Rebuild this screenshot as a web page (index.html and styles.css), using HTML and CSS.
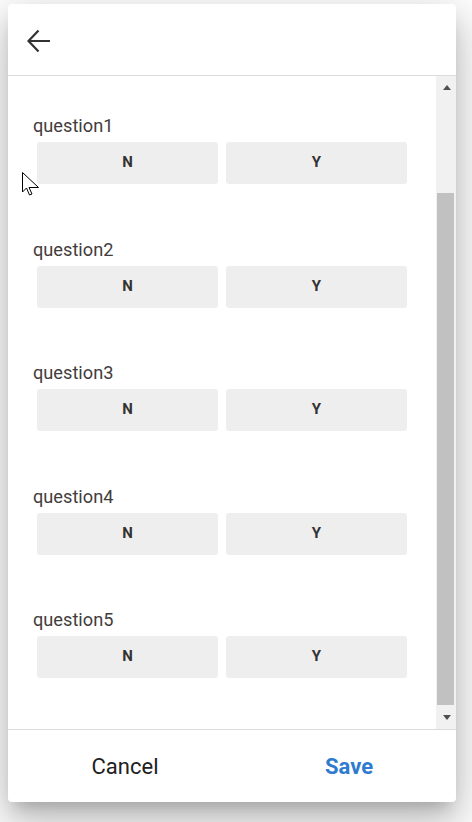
FILE: index.html
```html
<!DOCTYPE html>
<html>
<head>
<meta charset="utf-8">
<link rel="stylesheet" href="styles.css">
</head>
<body>
<div class="dialog">
  <div class="header">
    <svg class="back" width="24" height="24" viewBox="0 0 24 24">
      <path d="M11.5 1.5 L1.5 12 L11.5 22.5 M1.5 12 H23" fill="none" stroke="#333" stroke-width="2.2" stroke-linejoin="miter"/>
    </svg>
  </div>
  <div class="body">
    <div class="content">
      <div class="question">
        <div class="label">question1</div>
        <div class="choices"><div class="choice">N</div><div class="choice">Y</div></div>
      </div>
      <div class="question">
        <div class="label">question2</div>
        <div class="choices"><div class="choice">N</div><div class="choice">Y</div></div>
      </div>
      <div class="question">
        <div class="label">question3</div>
        <div class="choices"><div class="choice">N</div><div class="choice">Y</div></div>
      </div>
      <div class="question">
        <div class="label">question4</div>
        <div class="choices"><div class="choice">N</div><div class="choice">Y</div></div>
      </div>
      <div class="question">
        <div class="label">question5</div>
        <div class="choices"><div class="choice">N</div><div class="choice">Y</div></div>
      </div>
    </div>
    <div class="scrollbar">
      <div class="sb-btn"><span class="tri-up"></span></div>
      <div class="sb-track"><div class="sb-thumb"></div></div>
      <div class="sb-btn"><span class="tri-down"></span></div>
    </div>
  </div>
  <div class="footer">
    <div class="action cancel">Cancel</div>
    <div class="action save">Save</div>
  </div>
</div>
<svg class="cursor" width="18" height="25" viewBox="0 0 18 25">
  <path d="M0.5 0.5 L0.5 20 L4.5 16 L7.5 23 L10 22 L7 15.5 L16.5 15.5 Z" fill="#fff" stroke="#000" stroke-width="1"/>
</svg>
</body>
</html>
```
FILE: styles.css
```css
html, body {
  margin: 0;
  padding: 0;
  background: #ffffff;
}
body {
  font-family: Roboto, "Liberation Sans", Arial, sans-serif;
  width: 472px;
  height: 822px;
  overflow: hidden;
  position: relative;
}
.dialog {
  margin: 4px 0 0 8px;
  width: 448px;
  height: 798px;
  background: #fff;
  border-radius: 4px;
  display: flex;
  flex-direction: column;
  overflow: hidden;
  box-shadow: 0 11px 15px -7px rgba(0,0,0,0.2), 0 24px 38px 3px rgba(0,0,0,0.14), 0 9px 46px 8px rgba(0,0,0,0.12);
}
.header {
  height: 72px;
  border-bottom: 1px solid #dcdcdc;
  display: flex;
  align-items: center;
  padding-left: 19px;
  box-sizing: border-box;
  flex: none;
}
.back {
  width: 24px;
  height: 24px;
  margin-top: 2px;
}
.body {
  flex: 1;
  display: flex;
  min-height: 0;
}
.content {
  flex: 1;
  padding: 38px 29px 0 24px;
  box-sizing: border-box;
}
.question {
  margin-bottom: 53.5px;
}
.label {
  font-size: 18.2px;
  line-height: 24px;
  color: #433c3c;
  padding-left: 1px;
}
.choices {
  display: flex;
  gap: 8px;
  margin: 4px 0 0 5px;
}
.choice {
  flex: 1;
  height: 42px;
  box-sizing: border-box;
  padding-bottom: 2px;
  background: #eeeeee;
  border-radius: 3px;
  display: flex;
  align-items: center;
  justify-content: center;
  font-weight: 700;
  font-size: 15px;
  color: #333;
}
.scrollbar {
  width: 20px;
  flex: none;
  background: #f1f1f1;
  display: flex;
  flex-direction: column;
}
.sb-btn {
  height: 20px;
  display: flex;
  align-items: center;
  justify-content: center;
  flex: none;
}
.tri-up {
  width: 0; height: 0;
  border-left: 4.5px solid transparent;
  border-right: 4.5px solid transparent;
  border-bottom: 5px solid #505050;
  margin-left: 1px;
  margin-top: 2px;
}
.tri-down {
  width: 0; height: 0;
  border-left: 4.5px solid transparent;
  border-right: 4.5px solid transparent;
  border-top: 5px solid #505050;
  margin-left: 1px;
  margin-bottom: 4px;
}
.sb-track {
  flex: 1;
}
.sb-thumb {
  margin: 97px 0 0 1px;
  width: 17px;
  height: 512px;
  background: #c1c1c1;
}
.footer {
  height: 73px;
  border-top: 1px solid #dcdcdc;
  box-sizing: border-box;
  display: flex;
  flex: none;
}
.action {
  flex: 1;
  display: flex;
  align-items: center;
  justify-content: center;
  padding-left: 10px;
  font-size: 22px;
}
.cancel {
  color: #212121;
}
.save {
  color: #2f7bcf;
  font-weight: 700;
}
.cursor {
  position: absolute;
  left: 22px;
  top: 172px;
}
```
